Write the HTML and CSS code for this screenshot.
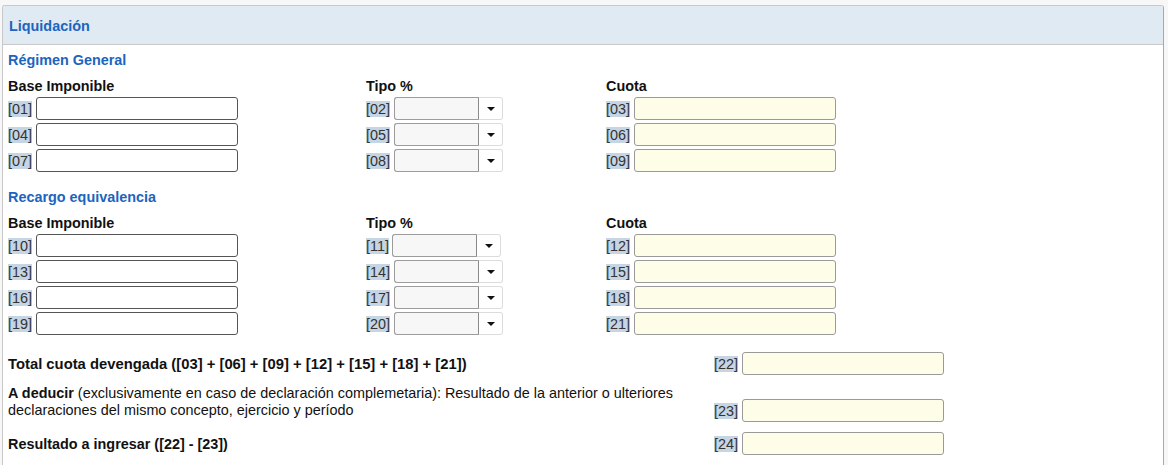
FILE: index.html
```html
<!DOCTYPE html>
<html lang="es">
<head>
<meta charset="utf-8">
<title>Liquidación</title>
<link rel="stylesheet" href="styles.css">
</head>
<body>
<div class="panel">
  <div class="panel-head">Liquidación</div>
  <div class="panel-body">
    <h3 class="section-title first">Régimen General</h3>
    <div class="grid">
      <div class="col-head">Base Imponible</div>
      <div class="col-head">Tipo %</div>
      <div class="col-head">Cuota</div>

      <div class="field"><span class="code">[01]</span><span class="inp"></span></div>
      <div class="field"><span class="code">[02]</span><span class="sel"><span class="sel-box"></span><span class="sel-btn"><i class="caret"></i></span></span></div>
      <div class="field"><span class="code">[03]</span><span class="inp calc"></span></div>

      <div class="field"><span class="code">[04]</span><span class="inp"></span></div>
      <div class="field"><span class="code">[05]</span><span class="sel"><span class="sel-box"></span><span class="sel-btn"><i class="caret"></i></span></span></div>
      <div class="field"><span class="code">[06]</span><span class="inp calc"></span></div>

      <div class="field"><span class="code">[07]</span><span class="inp"></span></div>
      <div class="field"><span class="code">[08]</span><span class="sel"><span class="sel-box"></span><span class="sel-btn"><i class="caret"></i></span></span></div>
      <div class="field"><span class="code">[09]</span><span class="inp calc"></span></div>
    </div>

    <h3 class="section-title">Recargo equivalencia</h3>
    <div class="grid">
      <div class="col-head">Base Imponible</div>
      <div class="col-head">Tipo %</div>
      <div class="col-head">Cuota</div>

      <div class="field"><span class="code">[10]</span><span class="inp"></span></div>
      <div class="field tight"><span class="code">[11]</span><span class="sel"><span class="sel-box"></span><span class="sel-btn"><i class="caret"></i></span></span></div>
      <div class="field"><span class="code">[12]</span><span class="inp calc"></span></div>

      <div class="field"><span class="code">[13]</span><span class="inp"></span></div>
      <div class="field"><span class="code">[14]</span><span class="sel"><span class="sel-box"></span><span class="sel-btn"><i class="caret"></i></span></span></div>
      <div class="field"><span class="code">[15]</span><span class="inp calc"></span></div>

      <div class="field"><span class="code">[16]</span><span class="inp"></span></div>
      <div class="field"><span class="code">[17]</span><span class="sel"><span class="sel-box"></span><span class="sel-btn"><i class="caret"></i></span></span></div>
      <div class="field"><span class="code">[18]</span><span class="inp calc"></span></div>

      <div class="field"><span class="code">[19]</span><span class="inp"></span></div>
      <div class="field"><span class="code">[20]</span><span class="sel"><span class="sel-box"></span><span class="sel-btn"><i class="caret"></i></span></span></div>
      <div class="field"><span class="code">[21]</span><span class="inp calc"></span></div>
    </div>

    <div class="totals">
      <div class="t-text"><b class="wide">Total cuota devengada ([03] + [06] + [09] + [12] + [15] + [18] + [21])</b></div>
      <div class="field"><span class="code">[22]</span><span class="inp calc"></span></div>

      <div class="t-text top"><b>A deducir</b> (exclusivamente en caso de declaración complemetaria): Resultado de la anterior o ulteriores declaraciones del mismo concepto, ejercicio y período</div>
      <div class="field bottom"><span class="code">[23]</span><span class="inp calc"></span></div>

      <div class="t-text"><b>Resultado a ingresar ([22] - [23])</b></div>
      <div class="field"><span class="code">[24]</span><span class="inp calc"></span></div>
    </div>
  </div>
</div>
</body>
</html>
```

FILE: styles.css
```css
html, body {
  margin: 0;
  padding: 0;
}

body {
  background: #f7f7f7;
  font-family: "Liberation Sans", Arial, sans-serif;
  font-size: 14.4px;
  line-height: 16px;
  color: #111;
  padding: 5px 0 0 2px;
  height: 460px;
  overflow: hidden;
}

.panel {
  width: 1160px;
  background: #fff;
  border: 1px solid #c8c8c8;
  border-right-color: #a9a9a9;
  border-radius: 3px 3px 0 0;
  min-height: 470px;
}

.panel-head {
  height: 38px;
  line-height: 40px;
  background: #dfeaf3;
  border-bottom: 1px solid #c9c9c9;
  border-radius: 3px 3px 0 0;
  padding-left: 6px;
  font-weight: bold;
  color: #1c64be;
}

.panel-body {
  padding: 0 0 0 5px;
}

.section-title {
  margin: 17px 0 10px 0;
  font-size: 14.4px;
  line-height: 16px;
  font-weight: bold;
  color: #1c64be;
}

.section-title.first {
  margin-top: 7px;
}

.grid {
  display: grid;
  grid-template-columns: 358px 240px 1fr;
  row-gap: 3px;
  align-items: center;
}

.col-head {
  font-weight: bold;
  color: #111;
  line-height: 16px;
}

.field {
  display: flex;
  align-items: center;
  gap: 4px;
  height: 23px;
}

.field.tight {
  gap: 3px;
}

.field.tight .code {
  width: 23px;
}

.code {
  display: inline-block;
  box-sizing: border-box;
  background: #c6d5e3;
  color: #333;
  line-height: 16px;
  height: 16px;
  width: 24px;
  overflow: hidden;
  white-space: nowrap;
}

.inp {
  display: block;
  box-sizing: border-box;
  width: 202px;
  height: 23px;
  border: 1px solid #555;
  border-radius: 3px;
  background: #fff;
}

.inp.calc {
  background: #fefde8;
  border-color: #9a9a9a;
}

.sel {
  display: flex;
  height: 23px;
}

.sel-box {
  box-sizing: border-box;
  width: 85px;
  height: 23px;
  background: #f7f7f7;
  border: 1px solid #9c9c9c;
  border-right-color: #8a8a8a;
  border-radius: 3px 0 0 3px;
}

.sel-btn {
  box-sizing: border-box;
  width: 24px;
  height: 23px;
  border: 1px solid #dcdcdc;
  border-left: none;
  border-radius: 0 3px 3px 0;
  background: #fff;
  display: flex;
  align-items: center;
  justify-content: center;
}

.caret {
  display: block;
  width: 0;
  height: 0;
  border-left: 4px solid transparent;
  border-right: 4px solid transparent;
  border-top: 4px solid #111;
  margin-top: 1px;
}

.totals {
  display: grid;
  grid-template-columns: 706px auto;
  row-gap: 10px;
  margin-top: 17px;
  align-items: center;
  justify-content: start;
}

.t-text {
  max-width: 690px;
  color: #111;
}

.t-text .wide {
  font-size: 14.8px;
}

.t-text.top {
  align-self: start;
  line-height: 17px;
  padding-bottom: 3px;
}

.field.bottom {
  align-self: end;
}
```
